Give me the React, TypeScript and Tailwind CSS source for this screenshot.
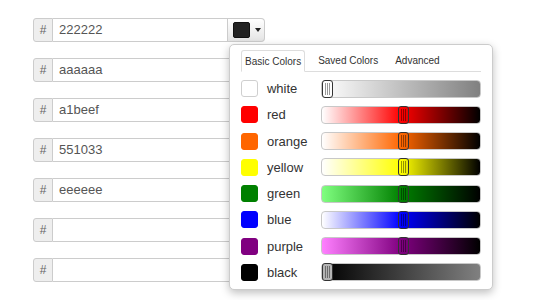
import React from 'react';

type Swatch = {
  name: string;
  color: string;
  track: string;
  thumb: 'start' | 'middle';
};

const swatches: Swatch[] = [
  { name: 'white', color: '#ffffff', track: 'bg-[linear-gradient(to_right,#ffffff,#808080)]', thumb: 'start' },
  { name: 'red', color: '#ff0000', track: 'bg-[linear-gradient(to_right,#ffffff,#ff0000_50%,#000000)]', thumb: 'middle' },
  { name: 'orange', color: '#ff6600', track: 'bg-[linear-gradient(to_right,#ffffff,#ff6600_50%,#000000)]', thumb: 'middle' },
  { name: 'yellow', color: '#ffff00', track: 'bg-[linear-gradient(to_right,#ffffff,#ffff00_50%,#000000)]', thumb: 'middle' },
  { name: 'green', color: '#008000', track: 'bg-[linear-gradient(to_right,#80ff80,#008000_50%,#000000)]', thumb: 'middle' },
  { name: 'blue', color: '#0000ff', track: 'bg-[linear-gradient(to_right,#ffffff,#0000ff_50%,#000000)]', thumb: 'middle' },
  { name: 'purple', color: '#800080', track: 'bg-[linear-gradient(to_right,#ff80ff,#800080_50%,#000000)]', thumb: 'middle' },
  { name: 'black', color: '#000000', track: 'bg-[linear-gradient(to_right,#000000,#808080)]', thumb: 'start' },
];

const values = ['222222', 'aaaaaa', 'a1beef', '551033', 'eeeeee', '', ''];

const Addon: React.FC = () => (
  <span className="w-[20px] h-full flex items-center justify-center bg-[#eeeeee] border border-[#cccccc] rounded-l-[3px] text-[12px] text-[#666666]">
    #
  </span>
);

const Slider: React.FC<{ s: Swatch }> = ({ s }) => (
  <div className={`relative w-[161px] h-[18px] rounded-[4px] border border-[#c8c8c8] ${s.track}`}>
    <div
      className={`absolute top-[-1px] h-[18px] w-[11px] rounded-[3px] border border-[#333333] flex justify-center gap-[1px] py-[2px] ${
        s.thumb === 'start' ? 'left-0 bg-white/70' : 'left-[76px]'
      }`}
    >
      <span className="w-[1px] bg-black/40" />
      <span className="w-[1px] bg-black/40" />
      <span className="w-[1px] bg-black/40" />
    </div>
  </div>
);

const ColorPopup: React.FC = () => (
  <div className="absolute left-[1px] top-[26px] w-[264px] h-[246px] bg-white border border-[#cccccc] rounded-[5px] shadow-[0_3px_8px_rgba(0,0,0,0.25)] px-[11px] pt-[5px] z-10">
    {/* tabs */}
    <div className="flex items-end border-b border-[#dddddd] h-[22px] text-[10px] text-[#333333]">
      <div className="h-[22px] px-[3px] flex items-center border border-[#dddddd] border-b-white rounded-t-[3px] bg-white mb-[-1px]">
        Basic Colors
      </div>
      <div className="h-[22px] flex items-center ml-[13px]">Saved Colors</div>
      <div className="h-[22px] flex items-center ml-[17px]">Advanced</div>
    </div>

    <div className="flex flex-col gap-[9.25px] pt-[8px]">
      {swatches.map((s) => (
        <div key={s.name} className="flex items-center h-[17px]">
          <span
            className="w-[17px] h-[17px] rounded-[3px] border border-[#d0d0d0]"
            style={{ backgroundColor: s.color, borderColor: s.name === 'white' ? '#cfcfcf' : s.color }}
          />
          <span className="ml-[9px] w-[54px] text-[13px] text-[#333333] leading-none">{s.name}</span>
          <Slider s={s} />
        </div>
      ))}
    </div>
  </div>
);

const App: React.FC = () => {
  return (
    <div
      className="w-[540px] h-[300px] bg-white pl-[33px] pt-[18px] overflow-hidden"
      style={{ fontFamily: '"Liberation Sans", Arial, sans-serif' }}
    >
      <div className="flex flex-col gap-[16px]">
        {values.map((v, i) => (
          <div key={i} className="flex h-[24px] w-[232px]">
            <Addon />
            {i === 0 ? (
              <>
                <div className="w-[175px] h-full flex items-center px-[6px] border-y border-r border-[#cccccc] text-[13px] text-[#555555]">
                  {v}
                </div>
                <div className="relative">
                  <button className="w-[37px] h-[24px] flex items-center pl-[5px] gap-[5px] border-y border-r border-[#cccccc] rounded-r-[4px] bg-[linear-gradient(to_bottom,#ffffff,#e4e4e4)]">
                    <span className="w-[17px] h-[16px] bg-[#222222] rounded-[2px] border border-[#111111]" />
                    <span className="w-0 h-0 border-x-[3px] border-x-transparent border-t-[4px] border-t-[#222222]" />
                  </button>
                  <ColorPopup />
                </div>
              </>
            ) : (
              <div className="flex-1 h-full flex items-center px-[6px] border-y border-r border-[#cccccc] rounded-r-[3px] text-[13px] text-[#555555]">
                {v}
              </div>
            )}
          </div>
        ))}
      </div>
    </div>
  );
};

export default App;
